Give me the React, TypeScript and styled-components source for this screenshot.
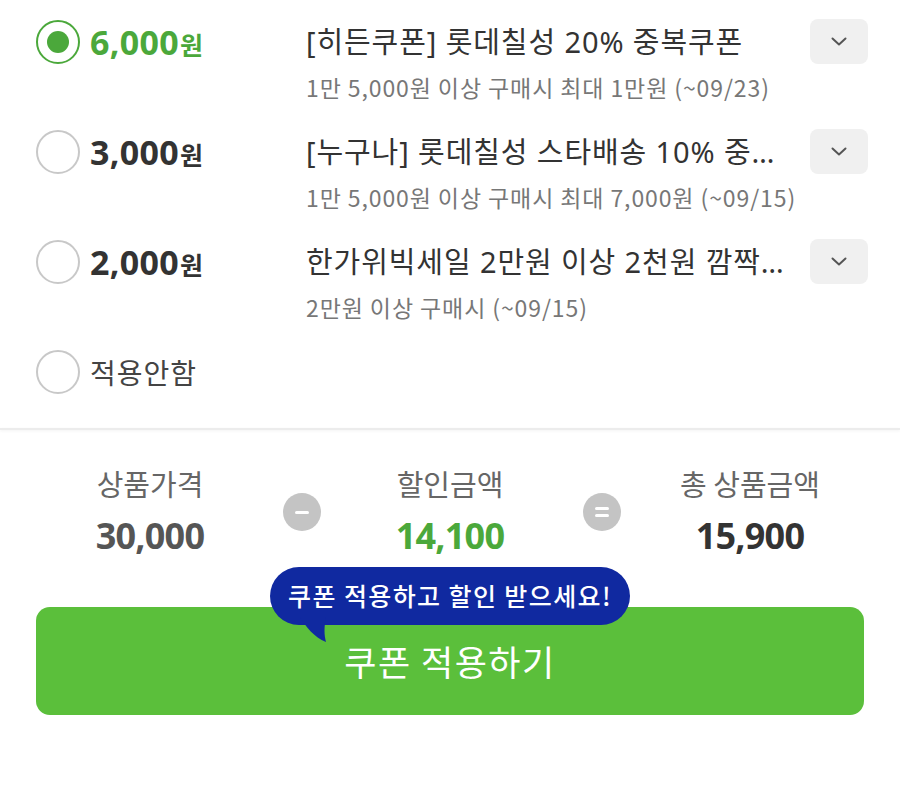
import React from 'react';
import styled, { createGlobalStyle } from 'styled-components';

const GlobalStyle = createGlobalStyle`
	html, body {
		margin: 0;
		padding: 0;
		background: #fff;
	}
	body {
		font-family: 'Noto Sans CJK KR', 'Noto Sans', sans-serif;
		color: #333;
	}
	* {
		box-sizing: border-box;
	}
`;

const GREEN = '#4ba83b';

const Page = styled.div`
	width: 900px;
	min-height: 810px;
	background: #fff;
`;

const CouponList = styled.div`
	display: flex;
	flex-direction: column;
	padding: 20px 32px 34px 36px;
`;

const Row = styled.label`
	display: flex;
	align-items: flex-start;
	height: 110px;

	&:last-child {
		height: 44px;
	}
`;

const Radio = styled.span<{ checked?: boolean }>`
	flex: none;
	width: 44px;
	height: 44px;
	border-radius: 50%;
	border: 2px solid ${(p) => (p.checked ? GREEN : '#c8c8c8')};
	display: flex;
	align-items: center;
	justify-content: center;

	&::after {
		content: '';
		width: 22px;
		height: 22px;
		border-radius: 50%;
		background: ${GREEN};
		display: ${(p) => (p.checked ? 'block' : 'none')};
	}
`;

const Amount = styled.div<{ checked?: boolean }>`
	flex: none;
	width: 206px;
	margin-left: 10px;
	height: 44px;
	display: flex;
	align-items: baseline;
	line-height: 44px;
	color: ${(p) => (p.checked ? GREEN : '#333')};
	font-weight: 700;
`;

const Num = styled.span`
	font-family: 'Noto Sans', sans-serif;
	font-size: 34px;
	letter-spacing: 0.3px;
`;

const Won = styled.span`
	font-size: 25px;
	margin-left: 1px;
`;

const NoneLabel = styled.div`
	margin-left: 10px;
	line-height: 44px;
	font-size: 28px;
	letter-spacing: 1px;
	color: #444;
`;

const Body = styled.div`
	flex: 1;
	min-width: 0;
	margin-left: 10px;
	display: flex;
	flex-direction: column;
	gap: 8px;
`;

const Title = styled.div`
	font-family: 'Noto Sans', 'Noto Sans CJK KR', sans-serif;
	font-size: 29px;
	line-height: 44px;
	color: #333;
	white-space: nowrap;
	overflow: hidden;
	text-overflow: ellipsis;
	letter-spacing: 0.9px;
`;

const Sub = styled.div`
	font-size: 23px;
	line-height: 30px;
	color: #777;
	white-space: nowrap;
	letter-spacing: 0.9px;
`;

const ToggleBox = styled.button`
	flex: none;
	width: 58px;
	height: 45px;
	margin-left: 10px;
	margin-top: -1px;
	border: none;
	border-radius: 8px;
	background: #f0f0f0;
	display: flex;
	align-items: center;
	justify-content: center;
	padding: 0;
`;

const Divider = styled.div`
	height: 2px;
	background: #ececec;
	box-shadow: 0 1px 3px rgba(0, 0, 0, 0.06);
`;

const Summary = styled.div`
	display: grid;
	grid-template-columns: 1fr 0 1fr 0 1fr;
	padding-top: 33px;
`;

const SumCol = styled.div`
	display: flex;
	flex-direction: column;
	align-items: center;
	gap: 11px;
`;

const SumLabel = styled.div`
	font-size: 29px;
	line-height: 40px;
	color: #666;
	letter-spacing: 0;
`;

const SumValue = styled.div<{ tone: string }>`
	font-family: 'Noto Sans', sans-serif;
	font-size: 36px;
	font-weight: 700;
	line-height: 44px;
	color: ${(p) => p.tone};
	letter-spacing: -0.8px;
`;

const OpCell = styled.div`
	display: flex;
	justify-content: center;
	padding-top: 30px;
`;

const OpCircle = styled.div`
	flex: none;
	width: 38px;
	height: 38px;
	margin-left: 4px;
	border-radius: 50%;
	background: #c4c4c4;
	display: flex;
	flex-direction: column;
	align-items: center;
	justify-content: center;
	gap: 4px;
`;

const OpBar = styled.span`
	width: 14px;
	height: 3px;
	border-radius: 2px;
	background: #fff;
`;

const ButtonArea = styled.div`
	padding: 49px 36px 0;
`;

const ApplyButton = styled.button`
	position: relative;
	width: 100%;
	height: 108px;
	border: none;
	border-radius: 14px;
	background: #5bbf3b;
	color: #fff;
	font-family: 'Noto Sans CJK KR', sans-serif;
	font-size: 35px;
	font-weight: 400;
	letter-spacing: 1.5px;
	padding: 0;
	line-height: 108px;
`;

const Bubble = styled.div`
	position: absolute;
	left: 50%;
	top: -40px;
	transform: translateX(-50%);
	width: 360px;
	height: 58px;
	border-radius: 29px;
	background: #1029a0;
	color: #fff;
	font-size: 25px;
	font-weight: 500;
	line-height: 56px;
	letter-spacing: 1.4px;
	text-align: center;
	white-space: nowrap;
`;

const Tail = styled.svg`
	position: absolute;
	left: 30px;
	top: 50px;
`;

const Chevron = () => (
	<svg width="18" height="11" viewBox="0 0 18 11">
		<path d="M2.5 2.5 L9 8.5 L15.5 2.5" fill="none" stroke="#555" strokeWidth="2" strokeLinecap="round" strokeLinejoin="round" />
	</svg>
);

type Coupon = {
	amount: string;
	title: string;
	sub: string;
	checked?: boolean;
};

const coupons: Coupon[] = [
	{ amount: '6,000', title: '[히든쿠폰] 롯데칠성 20% 중복쿠폰', sub: '1만 5,000원 이상 구매시 최대 1만원 (~09/23)', checked: true },
	{ amount: '3,000', title: '[누구나] 롯데칠성 스타배송 10% 중복쿠폰', sub: '1만 5,000원 이상 구매시 최대 7,000원 (~09/15)' },
	{ amount: '2,000', title: '한가위빅세일 2만원 이상 2천원 깜짝중복쿠폰', sub: '2만원 이상 구매시 (~09/15)' }
];

export default function App() {
	return (
		<Page>
			<GlobalStyle />
			<CouponList>
				{coupons.map((c) => (
					<Row key={c.amount}>
						<Radio checked={c.checked} />
						<Amount checked={c.checked}>
							<Num>{c.amount}</Num>
							<Won>원</Won>
						</Amount>
						<Body>
							<Title>{c.title}</Title>
							<Sub>{c.sub}</Sub>
						</Body>
						<ToggleBox>
							<Chevron />
						</ToggleBox>
					</Row>
				))}
				<Row>
					<Radio />
					<NoneLabel>적용안함</NoneLabel>
				</Row>
			</CouponList>
			<Divider />
			<Summary>
				<SumCol>
					<SumLabel>상품가격</SumLabel>
					<SumValue tone="#555">30,000</SumValue>
				</SumCol>
				<OpCell>
					<OpCircle>
						<OpBar />
					</OpCircle>
				</OpCell>
				<SumCol>
					<SumLabel>할인금액</SumLabel>
					<SumValue tone={GREEN}>14,100</SumValue>
				</SumCol>
				<OpCell>
					<OpCircle>
						<OpBar />
						<OpBar />
					</OpCircle>
				</OpCell>
				<SumCol>
					<SumLabel>총 상품금액</SumLabel>
					<SumValue tone="#333">15,900</SumValue>
				</SumCol>
			</Summary>
			<ButtonArea>
				<ApplyButton>
					<Bubble>
						쿠폰 적용하고 할인 받으세요!
						<Tail width="34" height="26" viewBox="0 0 34 26">
							<path d="M0 0 C6 10 14 20 26 25 C24 18 24 10 26 0 Z" fill="#1029a0" />
						</Tail>
					</Bubble>
					쿠폰 적용하기
				</ApplyButton>
			</ButtonArea>
		</Page>
	);
}
